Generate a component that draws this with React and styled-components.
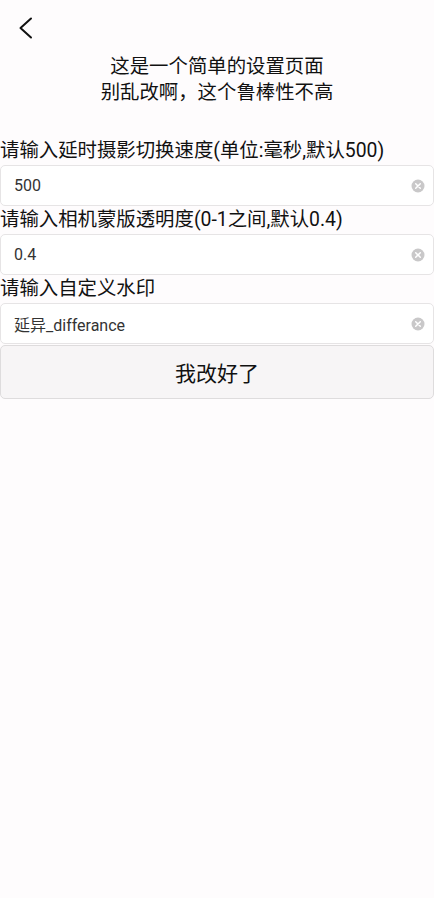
import React, { useState } from 'react'
import styled, { createGlobalStyle } from 'styled-components'

const GlobalStyle = createGlobalStyle`
  html, body {
    margin: 0;
    padding: 0;
    background: #fefcfd;
  }
  body {
    font-family: Roboto, 'Noto Sans CJK SC', sans-serif;
    color: #1a1a1a;
  }
`

const Page = styled.div`
  width: 434px;
  min-height: 898px;
  display: flex;
  flex-direction: column;
  background: #fefcfd;
`

const TopBar = styled.div`
  height: 54px;
  display: flex;
  align-items: flex-start;
  padding: 17px 0 0 18px;
  box-sizing: border-box;
`

const BackButton = styled.button`
  border: none;
  background: none;
  padding: 0;
  width: 16px;
  height: 22px;
  cursor: pointer;
  display: flex;
`

const Title = styled.div`
  text-align: center;
  font-size: 19.4px;
  line-height: 26px;
  color: #111;
  margin-bottom: 31px;
`

const Form = styled.form`
  display: flex;
  flex-direction: column;
`

const Label = styled.label`
  font-size: 19.4px;
  line-height: 28px;
  height: 28px;
  white-space: nowrap;
  color: #111;
`

const Field = styled.div`
  display: flex;
  align-items: center;
  height: 41px;
  box-sizing: border-box;
  border: 1px solid #e6e4e5;
  border-radius: 5px;
  background: #ffffff;
  padding: 0 8px 0 13px;
`

const Input = styled.input`
  flex: 1;
  border: none;
  outline: none;
  background: transparent;
  font-family: Roboto, 'Noto Sans CJK SC', sans-serif;
  font-size: 16px;
  color: #333;
  padding: 0;
`

const Clear = styled.button`
  border: none;
  background: none;
  padding: 0;
  width: 14px;
  height: 14px;
  display: flex;
  cursor: pointer;
`

const Submit = styled.button`
  margin-top: 1px;
  height: 54px;
  border: 1px solid #dedcdd;
  border-radius: 5px;
  background: #f7f5f6;
  font-family: Roboto, 'Noto Sans CJK SC', sans-serif;
  font-size: 21px;
  color: #111;
  cursor: pointer;
`

const ClearIcon = () => (
  <svg width="14" height="14" viewBox="0 0 14 14">
    <circle cx="7" cy="7" r="6.5" fill="#c9c8c9" />
    <path d="M4.7 4.7 L9.3 9.3 M9.3 4.7 L4.7 9.3" stroke="#fff" strokeWidth="1.5" strokeLinecap="round" />
  </svg>
)

const fields = [
  { name: 'speed', label: '请输入延时摄影切换速度(单位:毫秒,默认500)', value: '500' },
  { name: 'alpha', label: '请输入相机蒙版透明度(0-1之间,默认0.4)', value: '0.4' },
  { name: 'mark', label: '请输入自定义水印', value: '延异_differance' },
]

export default function App() {
  const [values, setValues] = useState(
    Object.fromEntries(fields.map(f => [f.name, f.value]))
  )

  return (
    <Page>
      <GlobalStyle />
      <TopBar>
        <BackButton aria-label="返回">
          <svg width="16" height="22" viewBox="0 0 16 22">
            <path d="M13 1.5 L2.5 11 L13 20.5" fill="none" stroke="#111" strokeWidth="2" strokeLinecap="round" strokeLinejoin="round" />
          </svg>
        </BackButton>
      </TopBar>
      <Title>
        这是一个简单的设置页面
        <br />
        别乱改啊，这个鲁棒性不高
      </Title>
      <Form onSubmit={e => e.preventDefault()}>
        {fields.map(f => (
          <React.Fragment key={f.name}>
            <Label htmlFor={f.name}>{f.label}</Label>
            <Field>
              <Input
                id={f.name}
                value={values[f.name]}
                onChange={e => setValues({ ...values, [f.name]: e.target.value })}
              />
              <Clear type="button" onClick={() => setValues({ ...values, [f.name]: '' })}>
                <ClearIcon />
              </Clear>
            </Field>
          </React.Fragment>
        ))}
        <Submit type="submit">我改好了</Submit>
      </Form>
    </Page>
  )
}
